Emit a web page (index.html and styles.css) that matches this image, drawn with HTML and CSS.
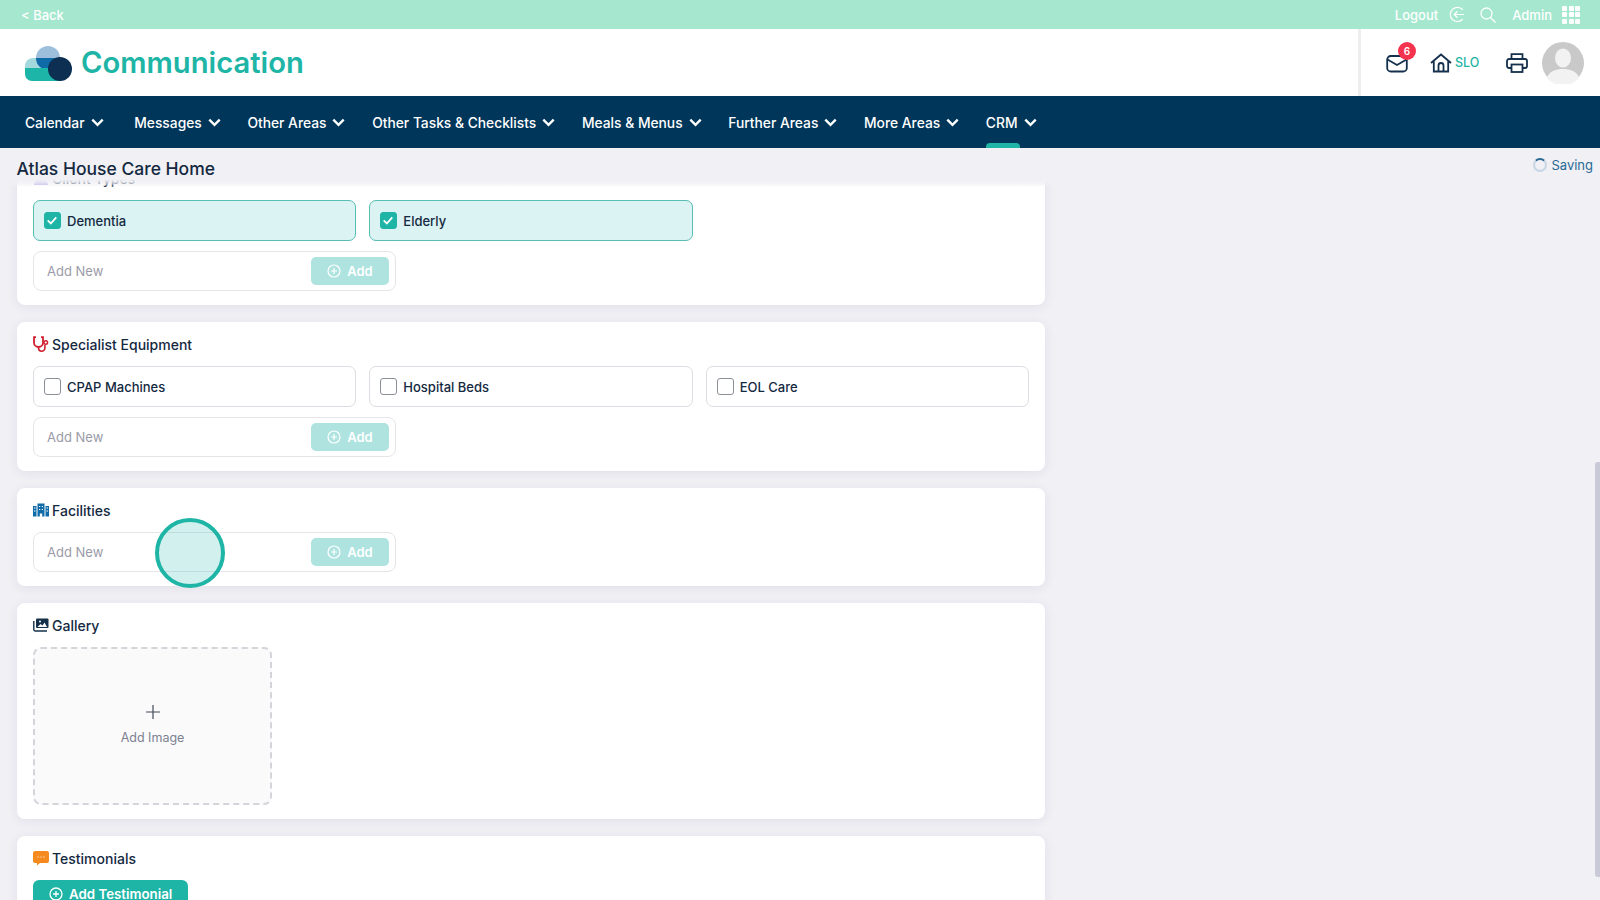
FILE: index.html
```html
<!DOCTYPE html>
<html lang="en">
<head>
<meta charset="utf-8">
<title>Communication</title>
<link rel="stylesheet" href="styles.css">
</head>
<body>
<div class="topbar">
  <a class="back">&lt; Back</a>
  <div class="top-right">
    <span class="logout">Logout</span>
    <svg class="ti ti-logout" viewBox="0 0 18 18"><path d="M14.5 4A7.5 7.5 0 1 0 14.5 14M5.5 9H16M9 5.5 5.5 9 9 12.5"/></svg>
    <svg class="ti ti-search" viewBox="0 0 16 16"><circle cx="6.5" cy="6.5" r="5.5"/><path d="M10.5 10.5 15.5 15.5"/></svg>
    <span class="admin">Admin</span>
    <span class="grid-icon"><i></i><i></i><i></i><i></i><i></i><i></i><i></i><i></i><i></i></span>
  </div>
</div>
<header class="header">
  <div class="brand">
    <svg class="logo" viewBox="0 0 47 35">
      <path d="M8 12h16v11H0v-3a8 8 0 0 1 8-8z" fill="#a3d9dc"/>
      <circle cx="23" cy="12" r="12" fill="#9dbfdc"/>
      <path d="M11 12h24A12 12 0 0 1 11 12z" fill="#0f6aa8"/>
      <path d="M0 22h36v13H7a7 7 0 0 1-7-7z" fill="#1db5a8"/>
      <circle cx="35" cy="23" r="12" fill="#0c2f52"/>
    </svg>
    <h1 class="brand-name">Communication</h1>
  </div>
  <div class="header-tools">
    <div class="mail">
      <svg class="hi" viewBox="0 0 22 20"><rect x="1.200" y="3" width="19.600" height="15.500" rx="3.500"/><path d="M1.500 6.500 11 12l9.500-5.500"/></svg>
      <span class="badge">6</span>
    </div>
    <div class="home">
      <svg class="hi" viewBox="0 0 22 20"><path d="M1 10 11 1.500 21 10M3.800 8v10.500h14.400V8M8.500 18.500v-6a2.500 2.500 0 0 1 5 0v6"/></svg>
      <span class="slo">SLO</span>
    </div>
    <svg class="hi printer" viewBox="0 0 22 20"><path d="M5.500 6V1.200h11V6M5.500 15H3a2 2 0 0 1-2-2V8a2 2 0 0 1 2-2h16a2 2 0 0 1 2 2v5a2 2 0 0 1-2 2h-2.500"/><rect x="5.500" y="11.500" width="11" height="7.500"/></svg>
    <svg class="avatar" viewBox="0 0 42 42"><circle cx="21" cy="21" r="21" fill="#c9c9c9"/><ellipse cx="21" cy="16" rx="8" ry="9.500" fill="#f2f2f2"/><path d="M5 36c2-7 9-9 16-9s14 2 16 9a21 21 0 0 1-32 0z" fill="#f2f2f2"/></svg>
  </div>
</header>
<nav class="nav">
  <a class="nav-item">Calendar <svg class="chev" viewBox="0 0 12 8"><path d="M1.200 1.500 6 6.200l4.800-4.700"/></svg></a>
  <a class="nav-item">Messages <svg class="chev" viewBox="0 0 12 8"><path d="M1.200 1.500 6 6.200l4.800-4.700"/></svg></a>
  <a class="nav-item">Other Areas <svg class="chev" viewBox="0 0 12 8"><path d="M1.200 1.500 6 6.200l4.800-4.700"/></svg></a>
  <a class="nav-item">Other Tasks &amp; Checklists <svg class="chev" viewBox="0 0 12 8"><path d="M1.200 1.500 6 6.200l4.800-4.700"/></svg></a>
  <a class="nav-item">Meals &amp; Menus <svg class="chev" viewBox="0 0 12 8"><path d="M1.200 1.500 6 6.200l4.800-4.700"/></svg></a>
  <a class="nav-item">Further Areas <svg class="chev" viewBox="0 0 12 8"><path d="M1.200 1.500 6 6.200l4.800-4.700"/></svg></a>
  <a class="nav-item">More Areas <svg class="chev" viewBox="0 0 12 8"><path d="M1.200 1.500 6 6.200l4.800-4.700"/></svg></a>
  <a class="nav-item active">CRM <svg class="chev" viewBox="0 0 12 8"><path d="M1.200 1.500 6 6.200l4.800-4.700"/></svg></a>
</nav>
<div class="title-row">
  <h2 class="page-title">Atlas House Care Home</h2>
  <div class="saving"><span class="spinner"></span>Saving</div>
</div>
<main class="scroller">
  <div class="stack">
    <section class="card">
      <h3 class="card-title"><svg class="ci" viewBox="0 0 16 16"><circle cx="8" cy="4.500" r="4" fill="#b9a6ea"/><path d="M1 15c0-4 3-6 7-6s7 2 7 6z" fill="#b9a6ea"/></svg>Client Types</h3>
      <div class="options">
        <label class="opt on"><span class="box"><svg viewBox="0 0 18 18"><path d="M3.500 9.500 7.500 13.500 14.500 5.500"/></svg></span>Dementia</label>
        <label class="opt on"><span class="box"><svg viewBox="0 0 18 18"><path d="M3.500 9.500 7.500 13.500 14.500 5.500"/></svg></span>Elderly</label>
      </div>
      <div class="add-row"><span class="ph">Add New</span><span class="add-btn"><svg class="plus" viewBox="0 0 14 14"><circle cx="7" cy="7" r="6"/><path d="M7 4v6M4 7h6"/></svg>Add</span></div>
    </section>
    <section class="card">
      <h3 class="card-title"><svg class="ci" viewBox="0 0 16 16"><path d="M3 1.200H1V6.500a4.500 4.500 0 0 0 9 0V1.200H8" fill="none" stroke="#d0202f" stroke-width="1.800"/><path d="M5.500 11v1a3.200 3.200 0 0 0 6.400 0V9" fill="none" stroke="#d0202f" stroke-width="1.600"/><circle cx="12.800" cy="6.500" r="1.800" fill="none" stroke="#d0202f" stroke-width="1.400"/></svg>Specialist Equipment</h3>
      <div class="options">
        <label class="opt"><span class="box"></span>CPAP Machines</label>
        <label class="opt"><span class="box"></span>Hospital Beds</label>
        <label class="opt"><span class="box"></span>EOL Care</label>
      </div>
      <div class="add-row"><span class="ph">Add New</span><span class="add-btn"><svg class="plus" viewBox="0 0 14 14"><circle cx="7" cy="7" r="6"/><path d="M7 4v6M4 7h6"/></svg>Add</span></div>
    </section>
    <section class="card">
      <h3 class="card-title"><svg class="ci" viewBox="0 0 16 16"><path d="M0 4h3.500v10.500H0zM12.500 4H16v10.500h-3.500zM4.500 1.500h7v13H9.200v-3H6.800v3H4.500z" fill="#0f6aa8"/><path d="M1 6h1.500M1 9h1.500M13.500 6H15M13.500 9H15M6 4.500h1.200M8.800 4.500H10M6 7.500h1.200M8.800 7.500H10" stroke="#fff" stroke-width="1.200"/></svg>Facilities</h3>
      <div class="add-row"><span class="ph">Add New</span><span class="add-btn"><svg class="plus" viewBox="0 0 14 14"><circle cx="7" cy="7" r="6"/><path d="M7 4v6M4 7h6"/></svg>Add</span></div>
    </section>
    <section class="card">
      <h3 class="card-title"><svg class="ci" viewBox="0 0 16 16"><path d="M4 1.500h10.500a1 1 0 0 1 1 1V10a1 1 0 0 1-1 1H4a1 1 0 0 1-1-1V2.500a1 1 0 0 1 1-1z" fill="#15304a"/><circle cx="7" cy="4.500" r="1" fill="#fff"/><path d="M4.500 10l3-3 2 1.500 2-3 2.500 4.500z" fill="#fff"/><path d="M.8 4v8.500a1.500 1.500 0 0 0 1.500 1.500H14" fill="none" stroke="#15304a" stroke-width="1.400"/></svg>Gallery</h3>
      <div class="upload">
        <svg class="upload-plus" viewBox="0 0 14 14"><path d="M7 0v14M0 7h14"/></svg>
        <span class="upload-label">Add Image</span>
      </div>
    </section>
    <section class="card">
      <h3 class="card-title"><svg class="ci" viewBox="0 0 16 16"><path d="M2 1h12a2 2 0 0 1 2 2v8a2 2 0 0 1-2 2H7l-3 2.500V13H2a2 2 0 0 1-2-2V3a2 2 0 0 1 2-2z" fill="#f58a1f"/><path d="M4.500 7h1M7.500 7h1M10.500 7h1" stroke="#fff" stroke-width="1"/></svg>Testimonials</h3>
      <span class="primary-btn"><svg class="plus" viewBox="0 0 14 14"><circle cx="7" cy="7" r="6"/><path d="M7 4v6M4 7h6"/></svg>Add Testimonial</span>
    </section>
  </div>
</main>
<div class="click-ring"></div>
<div class="scroll-thumb"></div>
</body>
</html>
```
FILE: styles.css
```css
* { box-sizing: border-box; }
html, body { margin: 0; height: 100%; overflow: hidden; }
body { background: #f0f0f5; font-family: Inter, "Liberation Sans", sans-serif; color: #14293f; display: flex; flex-direction: column; height: 900px; position: relative; }

.topbar { height: 29px; background: #a5e8cf; display: flex; align-items: center; justify-content: space-between; padding: 0 20px 0 21px; color: #fff; font-size: 13px; font-weight: 500; flex: none; }
.top-right { display: flex; align-items: center; }
.logout { margin-right: 1px; }
.ti { fill: none; stroke: #fff; stroke-width: 1.3; }
.ti-logout { width: 17px; height: 17px; margin-left: 10px; }
.ti-search { width: 16px; height: 16px; margin-left: 14px; }
.admin { margin-left: 16px; }
.grid-icon { display: grid; grid-template-columns: repeat(3, 5px); grid-auto-rows: 5px; gap: 1.500px; margin-left: 10px; }
.grid-icon i { background: #fff; border-radius: 1px; }

.header { height: 67px; background: #fff; display: flex; justify-content: space-between; align-items: stretch; flex: none; }
.brand { display: flex; align-items: center; padding-left: 25px; }
.logo { width: 47px; height: 35px; margin-top: 1px; }
.brand-name { margin: 0 0 0 9px; font-size: 29.200px; font-weight: 600; color: #1eb5a6; line-height: 1; }
.header-tools { display: flex; align-items: center; border-left: 3px solid #eeeef1; width: 242px; padding-left: 25px; }
.hi { width: 22px; height: 20px; fill: none; stroke: #14304c; stroke-width: 1.800; display: block; }
.mail { position: relative; }
.badge { position: absolute; left: 12px; top: -11px; width: 18px; height: 18px; border-radius: 50%; background: #f5334f; color: #fff; font-size: 10px; font-weight: 600; display: flex; align-items: center; justify-content: center; }
.home { display: flex; align-items: center; margin-left: 22px; }
.slo { color: #1eb5a6; font-size: 12.500px; margin-left: 3px; font-weight: 500; width: 24px; }
.printer { margin-left: 27px; }
.avatar { width: 42px; height: 42px; margin-left: 14px; }

.nav { height: 52px; background: #00365a; display: flex; align-items: center; padding-left: 25px; gap: 26.700px; flex: none; }
.nav-item { color: #fff; font-size: 13.800px; font-weight: 500; display: flex; align-items: center; gap: 6px; height: 52px; padding-top: 1px; position: relative; white-space: nowrap; }
.nav-item:first-child { margin-right: 4px; }
.chev { width: 13px; height: 8.700px; fill: none; stroke: #fff; stroke-width: 2.200; }
.active::after { content: ""; position: absolute; left: 0; bottom: 0; width: 34px; height: 5px; background: #1eb5a6; border-radius: 4px 4px 0 0; }

.title-row { height: 32px; flex: none; display: flex; justify-content: space-between; padding: 0 7px 0 16.500px; position: relative; }
.page-title { margin: 11px 0 0; font-size: 17.500px; font-weight: 500; line-height: 20px; color: #14293f; }
.saving { display: flex; align-items: center; height: 18px; margin-top: 8px; color: #2a6a94; font-size: 13px; }
.spinner { width: 14px; height: 14px; border-radius: 50%; border: 2px solid #c7d6e4; border-top-color: #2a6a94; margin-right: 4px; }

.scroller { flex: 1; overflow: hidden; width: 1060px; padding-left: 17px; position: relative; }
.scroller::before { content: ""; position: absolute; z-index: 1; left: 0; right: 0; top: 0; height: 7px; background: linear-gradient(rgba(240, 240, 245, .9) 20%, rgba(240, 240, 245, .6) 60%, rgba(240, 240, 245, 0)); }
.stack { display: flex; flex-direction: column; gap: 17px; margin-top: -24px; }
.card { background: #fff; border-radius: 8px; padding: 11px 16px 14px; box-shadow: 0 2px 12px rgba(40, 40, 80, .08); width: 1028px; }
.card-title { margin: 0 0 11px; display: flex; align-items: center; gap: 3px; font-size: 14px; font-weight: 500; height: 22px; color: #14293f; }
.ci { width: 16px; height: 16px; flex: none; }
.options { display: grid; grid-template-columns: repeat(3, 1fr); gap: 13px; margin-bottom: 10px; }
.opt { height: 41px; border: 1px solid #dcdce2; border-radius: 7px; display: flex; align-items: center; padding-left: 10px; font-size: 13px; font-weight: 500; color: #14293f; }
.opt.on { background: #dbf3f2; border-color: #58bdb5; }
.box { width: 17px; height: 17px; border-radius: 3px; border: 1.500px solid #8a8f99; margin-right: 6px; display: block; flex: none; }
.on .box { background: #1eb5a6; border-color: #1eb5a6; }
.box svg { display: block; width: 14px; height: 14px; fill: none; stroke: #fff; stroke-width: 2.400; }
.add-row { width: 363px; height: 40px; border: 1px solid #e6e6ea; border-radius: 8px; display: flex; align-items: center; justify-content: space-between; padding: 0 6px 0 13px; }
.ph { color: #9b9ba8; font-size: 13px; }
.add-btn { width: 78px; height: 28px; background: #aee3e0; border-radius: 5px; color: #fff; font-size: 13px; font-weight: 600; display: flex; align-items: center; justify-content: center; gap: 6px; }
.plus { width: 14px; height: 14px; fill: none; stroke: #fff; stroke-width: 1.200; }
.upload { width: 239px; height: 158px; border: 2px dashed #d4d4da; border-radius: 8px; background: #fafafb; display: flex; flex-direction: column; align-items: center; padding-top: 56px; color: #7c8190; }
.upload-plus { width: 14px; height: 14px; fill: none; stroke: #444b57; stroke-width: 1.200; display: block; }
.upload-label { font-size: 12.500px; margin-top: 11px; }
.primary-btn { display: inline-flex; align-items: center; gap: 6px; width: 155px; height: 27px; background: #1eb5a6; border-radius: 6px; color: #fff; font-size: 13.300px; font-weight: 600; padding-left: 16px; }
.primary-btn .plus { stroke-width: 1.300; }

.click-ring { position: absolute; left: 155px; top: 518px; width: 70px; height: 70px; border-radius: 50%; border: 4px solid #1eb5a6; background: rgba(30, 181, 166, .2); }
.scroll-thumb { position: absolute; left: 1595px; top: 462px; width: 5px; height: 415px; background: #c9c9d8; border-radius: 3px 0 0 3px; }
```
